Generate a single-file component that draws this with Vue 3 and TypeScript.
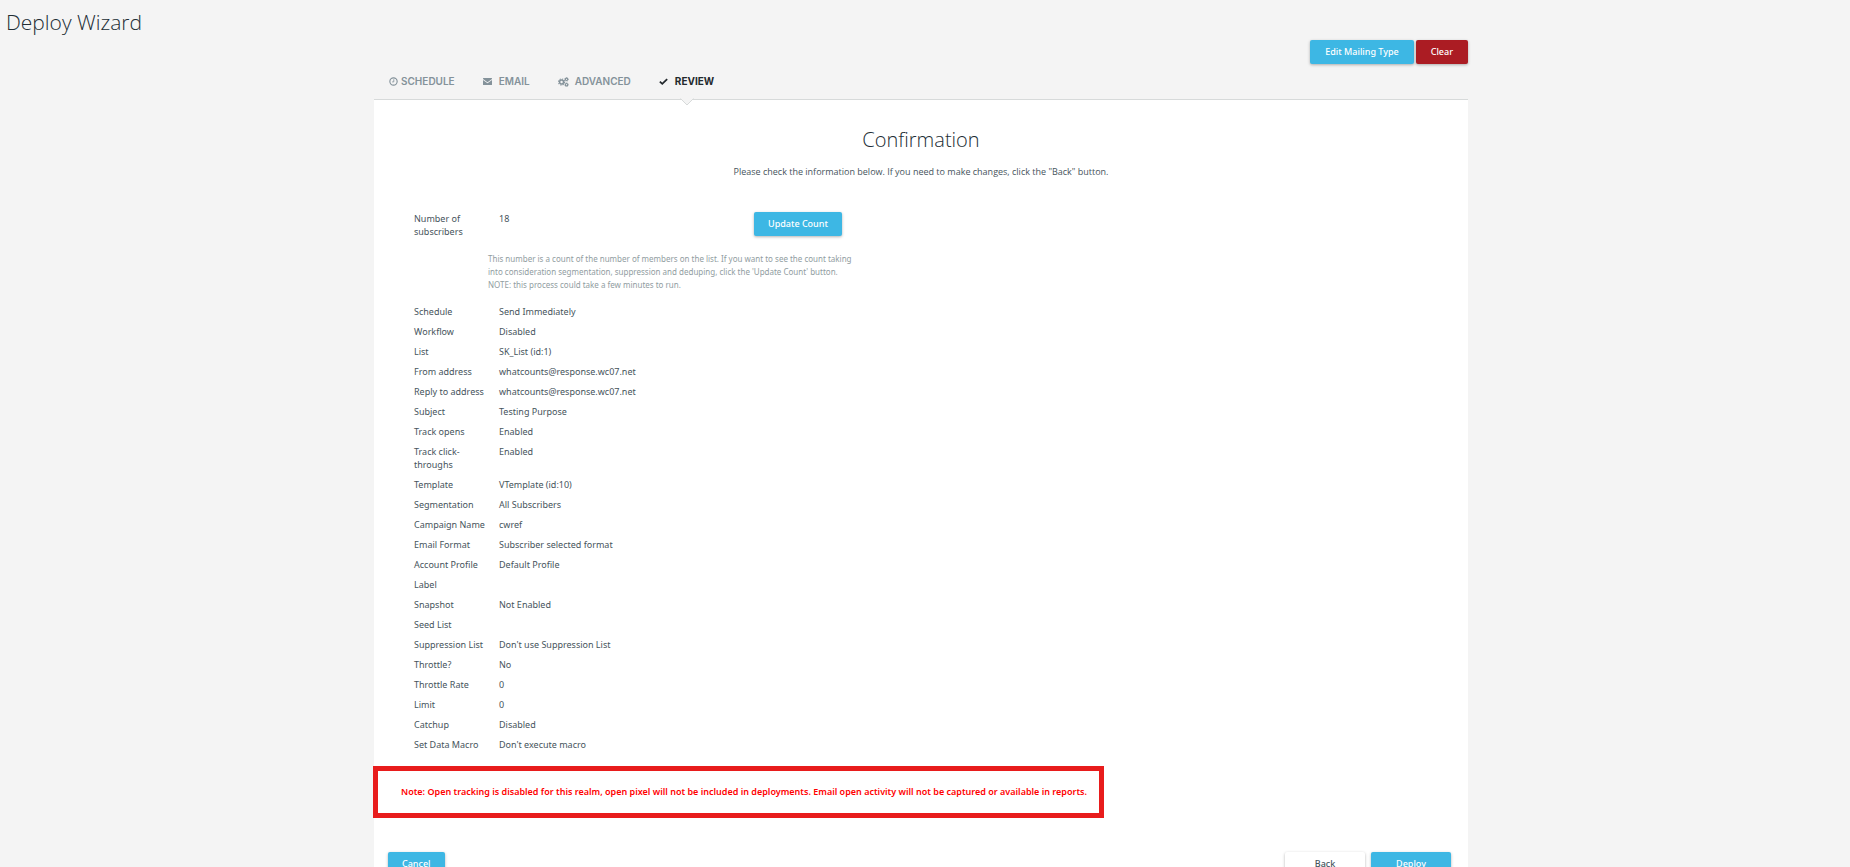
<script setup lang="ts">
interface Detail {
  label: string
  value: string
}

type TabIcon = 'clock' | 'mail' | 'gears' | 'check'

interface Tab {
  label: string
  icon: TabIcon
  active: boolean
}

const tabs: Tab[] = [
  { label: 'SCHEDULE', icon: 'clock', active: false },
  { label: 'EMAIL', icon: 'mail', active: false },
  { label: 'ADVANCED', icon: 'gears', active: false },
  { label: 'REVIEW', icon: 'check', active: true },
]

const details: Detail[] = [
  { label: 'Schedule', value: 'Send Immediately' },
  { label: 'Workflow', value: 'Disabled' },
  { label: 'List', value: 'SK_List (id:1)' },
  { label: 'From address', value: 'whatcounts@response.wc07.net' },
  { label: 'Reply to address', value: 'whatcounts@response.wc07.net' },
  { label: 'Subject', value: 'Testing Purpose' },
  { label: 'Track opens', value: 'Enabled' },
  { label: 'Track click-throughs', value: 'Enabled' },
  { label: 'Template', value: 'VTemplate (id:10)' },
  { label: 'Segmentation', value: 'All Subscribers' },
  { label: 'Campaign Name', value: 'cwref' },
  { label: 'Email Format', value: 'Subscriber selected format' },
  { label: 'Account Profile', value: 'Default Profile' },
  { label: 'Label', value: '' },
  { label: 'Snapshot', value: 'Not Enabled' },
  { label: 'Seed List', value: '' },
  { label: 'Suppression List', value: "Don't use Suppression List" },
  { label: 'Throttle?', value: 'No' },
  { label: 'Throttle Rate', value: '0' },
  { label: 'Limit', value: '0' },
  { label: 'Catchup', value: 'Disabled' },
  { label: 'Set Data Macro', value: "Don't execute macro" },
]
</script>

<template>
  <div class="page">
    <h1 class="title">Deploy Wizard</h1>
    <main class="wizard">
      <div class="toolbar">
        <button type="button" class="btn primary">Edit Mailing Type</button>
        <button type="button" class="btn danger">Clear</button>
      </div>

      <nav class="tabs">
        <a v-for="tab in tabs" :key="tab.label" href="#" class="tab" :class="[tab.icon, { active: tab.active }]">
          <svg v-if="tab.icon === 'clock'" class="icon" viewBox="0 0 16 16" aria-hidden="true">
            <circle cx="8" cy="8" r="6.5" fill="none" stroke="currentColor" stroke-width="2" />
            <path d="M8.5 4v4.7H5.5" fill="none" stroke="currentColor" stroke-width="1.5" />
          </svg>
          <svg v-else-if="tab.icon === 'mail'" class="icon" viewBox="0 0 18 14" aria-hidden="true">
            <path d="M1 0h16a1 1 0 0 1 1 1v1.2L9 8.6 0 2.2V1a1 1 0 0 1 1-1z" fill="currentColor" />
            <path d="M0 4l9 6.4L18 4v9a1 1 0 0 1-1 1H1a1 1 0 0 1-1-1z" fill="currentColor" />
          </svg>
          <svg v-else-if="tab.icon === 'gears'" class="icon" viewBox="0 0 20 18" aria-hidden="true">
            <circle cx="6.5" cy="9" r="3.6" fill="none" stroke="currentColor" stroke-width="2.8" />
            <circle cx="6.5" cy="9" r="5.6" fill="none" stroke="currentColor" stroke-width="2" stroke-dasharray="2.2 2.2" />
            <circle cx="15.5" cy="4.2" r="2.2" fill="none" stroke="currentColor" stroke-width="2" />
            <circle cx="15.5" cy="4.2" r="3.4" fill="none" stroke="currentColor" stroke-width="1.4" stroke-dasharray="1.4 1.27" />
            <circle cx="15.5" cy="13.8" r="2.2" fill="none" stroke="currentColor" stroke-width="2" />
            <circle cx="15.5" cy="13.8" r="3.4" fill="none" stroke="currentColor" stroke-width="1.4" stroke-dasharray="1.4 1.27" />
          </svg>
          <svg v-else class="icon" viewBox="0 0 16 12" aria-hidden="true">
            <path d="M1.5 6.2l4.3 4L14.5 1.8" fill="none" stroke="currentColor" stroke-width="3.2" />
          </svg>
          <span>{{ tab.label }}</span>
          <svg v-if="tab.active" class="pointer" viewBox="0 0 14 8" aria-hidden="true">
            <path d="M0 0h14L7 7z" fill="#f4f4f4" />
            <path d="M0.5 0.5L7 7l6.5-6.5" fill="none" stroke="#d7dada" />
          </svg>
        </a>
      </nav>

      <section class="card">
        <h2 class="heading">Confirmation</h2>
        <p class="intro">Please check the information below. If you need to make changes, click the "Back" button.</p>

        <dl class="details count">
          <div class="row">
            <dt>Number of subscribers</dt>
            <dd>18</dd>
            <dd><button type="button" class="btn primary">Update Count</button></dd>
          </div>
        </dl>
        <p class="help">
          This number is a count of the number of members on the list. If you want to see the count taking into
          consideration segmentation, suppression and deduping, click the 'Update Count' button.<br />
          NOTE: this process could take a few minutes to run.
        </p>
        <dl class="details">
          <div v-for="item in details" :key="item.label" class="row">
            <dt>{{ item.label }}</dt>
            <dd>{{ item.value }}</dd>
          </div>
        </dl>

        <p class="note">
          Note: Open tracking is disabled for this realm, open pixel will not be included in deployments. Email open
          activity will not be captured or available in reports.
        </p>

        <footer class="actions">
          <button type="button" class="btn primary">Cancel</button>
          <div class="forward">
            <button type="button" class="btn plain wide">Back</button>
            <button type="button" class="btn primary wide">Deploy</button>
          </div>
        </footer>
      </section>
    </main>
  </div>
</template>

<style>
body {
  margin: 0;
  background: #f4f4f4;
}
</style>

<style scoped>
.page {
  box-sizing: border-box;
  padding: 8px 8px 0 0;
  color: #46545c;
  font-family: 'Noto Sans', 'Open Sans', sans-serif;
  font-size: 9px;
  line-height: 13px;
}

h1,
h2,
p,
dl,
dd {
  margin: 0;
}

.title,
.heading {
  color: #222d34;
  font-family: 'Open Sans', sans-serif;
  font-size: 20px;
  font-weight: 300;
  line-height: 28px;
}

.title {
  padding-left: 6px;
  font-size: 21px;
}

.wizard {
  max-width: 1094px;
  margin: 4px auto 0;
}

.toolbar {
  display: flex;
  justify-content: flex-end;
  gap: 2px;
}

.btn {
  height: 24px;
  padding: 0 14px 1px;
  border: 0;
  border-radius: 2px;
  box-shadow: 0 1px 3px rgba(0, 0, 0, 0.3);
  color: #fff;
  font: inherit;
  font-weight: 500;
  white-space: nowrap;
}

.toolbar .btn {
  padding: 0 15px 1px;
}

.primary {
  background: #3db7e4;
}

.danger {
  background: #ab1c23;
}

.plain {
  background: #fff;
  color: #46545c;
}

.wide {
  width: 80px;
}

.tabs {
  display: flex;
  gap: 28px;
  height: 35px;
  padding-left: 15px;
}

.tab {
  position: relative;
  display: flex;
  align-items: center;
  gap: 7px;
  color: #84929a;
  font-family: Inter, sans-serif;
  font-size: 10px;
  font-weight: 600;
  text-decoration: none;
}

.active {
  color: #23292d;
  font-weight: 700;
}

.icon {
  width: 9px;
  height: 9px;
}

.clock {
  gap: 3px;
}

.gears {
  gap: 6px;
}

.gears .icon {
  width: 11px;
  height: 10px;
}

.pointer {
  position: absolute;
  top: 34px;
  left: 50%;
  width: 14px;
  height: 8px;
  margin-left: -7px;
}

.card {
  border-top: 1px solid #d7dada;
  background: #fff;
}

.heading {
  padding-top: 26px;
  text-align: center;
}

.intro {
  padding-top: 11px;
  font-family: 'Open Sans', sans-serif;
  text-align: center;
}

.details {
  display: grid;
  gap: 7px;
  padding: 0 40px;
}

.row {
  display: grid;
  grid-template-columns: 72px 242px 1fr;
  column-gap: 13px;
}

.count {
  padding-top: 34px;
}

.help {
  max-width: 370px;
  margin: 14px 0 14px 114px;
  color: #919da1;
  font-size: 8px;
}

.note {
  width: fit-content;
  margin: 15px 0 0 -1px;
  padding: 14px 12px 15px 23px;
  border: 5px solid #e81c1c;
  color: #f00;
  font-weight: 600;
}

.actions {
  display: flex;
  justify-content: space-between;
  padding: 34px 17px 24px 14px;
}

.forward {
  display: flex;
  gap: 6px;
}
</style>
